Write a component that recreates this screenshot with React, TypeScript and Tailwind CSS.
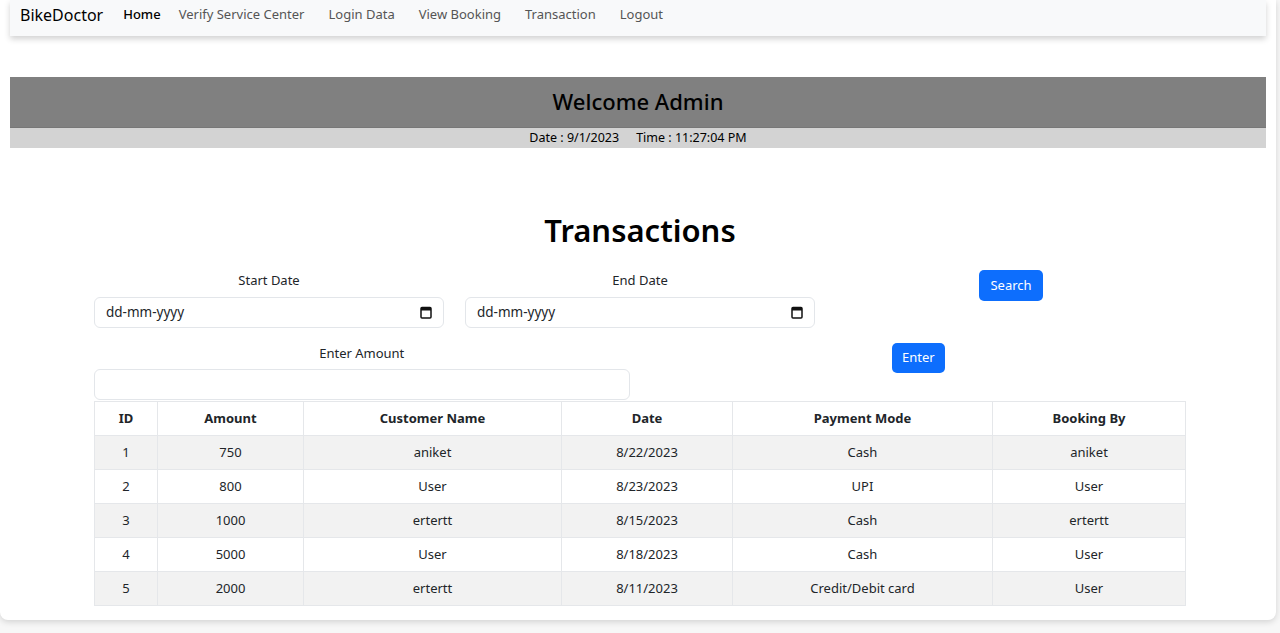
const rows = [
  { id: 1, amount: 750, name: "aniket", date: "8/22/2023", mode: "Cash", by: "aniket" },
  { id: 2, amount: 800, name: "User", date: "8/23/2023", mode: "UPI", by: "User" },
  { id: 3, amount: 1000, name: "ertertt", date: "8/15/2023", mode: "Cash", by: "ertertt" },
  { id: 4, amount: 5000, name: "User", date: "8/18/2023", mode: "Cash", by: "User" },
  { id: 5, amount: 2000, name: "ertertt", date: "8/11/2023", mode: "Credit/Debit card", by: "User" },
];

const navLinks = ["Verify Service Center", "Login Data", "View Booking", "Transaction", "Logout"];

function CalendarIcon() {
  return (
    <svg width="12" height="13" viewBox="0 0 12 13" className="shrink-0">
      <rect x="1" y="1.5" width="10" height="10.5" rx="1" fill="none" stroke="#111" strokeWidth="1.5" />
      <rect x="1" y="1.5" width="10" height="3" fill="#111" />
    </svg>
  );
}

function DateField() {
  return (
    <div className="h-[31px] w-full flex items-center justify-between px-[11px] border border-[#e3e6ea] rounded-[6px] bg-white text-[13.5px] text-[#212529]">
      <span>dd-mm-yyyy</span>
      <CalendarIcon />
    </div>
  );
}

export default function App() {
  const th = "border border-[#e5e7ea] font-bold text-[13px] text-[#212529] h-[34px] text-center";
  const td = "border border-[#e5e7ea] text-[13px] text-[#212529] h-[34px] text-center";
  return (
    <div className="min-h-screen bg-[#f7f7f7] font-['Noto_Sans',sans-serif]">
      <div className="w-[1276px] h-[620px] bg-white rounded-b-[8px] shadow-[0_2px_6px_rgba(0,0,0,0.15)] overflow-hidden">
        <nav className="mx-[10px] h-[36px] bg-[#f8f9fa] shadow-[0_3px_6px_rgba(0,0,0,0.18)] flex items-center pl-[10px] pb-[6px]">
          <span className="text-[16px] text-black mr-[20px]">BikeDoctor</span>
          <span className="text-[13px] text-black font-medium mr-[6px]">Home</span>
          {navLinks.map((l) => (
            <span key={l} className="text-[13px] text-[#555] px-[12px]">{l}</span>
          ))}
        </nav>

        <div className="mx-[10px] mt-[41px]">
          <div className="h-[51px] bg-[#808080] flex items-center justify-center border-b border-[#777] pb-[2px]">
            <span className="text-[22px] text-black font-medium">Welcome Admin</span>
          </div>
          <div className="h-[20px] bg-[#d3d3d3] flex items-center justify-center text-[12.5px] text-black">
            <span>Date : 9/1/2023</span>
            <span className="ml-[17px]">Time : 11:27:04 PM</span>
          </div>
        </div>

        <div className="w-[1092px] ml-[94px]">
          <h1 className="mt-[62px] h-[40px] flex items-center justify-center text-[31px] font-semibold text-black">Transactions</h1>

          <div className="mt-[20px] grid grid-cols-3 gap-x-[21px]">
            <div className="flex flex-col items-center">
              <label className="h-[21px] leading-[21px] text-[13px] text-[#212529]">Start Date</label>
              <div className="mt-[6px] w-full"><DateField /></div>
            </div>
            <div className="flex flex-col items-center">
              <label className="h-[21px] leading-[21px] text-[13px] text-[#212529]">End Date</label>
              <div className="mt-[6px] w-full"><DateField /></div>
            </div>
            <div className="flex justify-center items-start">
              <button className="h-[31px] px-[11px] rounded-[5px] bg-[#0d6efd] text-white text-[13px]">Search</button>
            </div>
          </div>

          <div className="mt-[15px] grid grid-cols-2 gap-x-[21px]">
            <div className="flex flex-col items-center">
              <label className="h-[21px] leading-[21px] text-[13px] text-[#212529]">Enter Amount</label>
              <div className="mt-[5px] w-full h-[31px] border border-[#e3e6ea] rounded-[6px] bg-white" />
            </div>
            <div className="flex justify-center items-start">
              <button className="h-[30px] px-[10px] rounded-[5px] bg-[#0d6efd] text-white text-[13px]">Enter</button>
            </div>
          </div>

          <table className="mt-[1px] w-full border-collapse">
            <thead>
              <tr className="bg-white">
                <th className={`${th} w-[63px]`}>ID</th>
                <th className={`${th} w-[146px]`}>Amount</th>
                <th className={`${th} w-[258px]`}>Customer Name</th>
                <th className={`${th} w-[171px]`}>Date</th>
                <th className={`${th} w-[260px]`}>Payment Mode</th>
                <th className={th}>Booking By</th>
              </tr>
            </thead>
            <tbody>
              {rows.map((r, i) => (
                <tr key={r.id} className={i % 2 === 0 ? "bg-[#f2f2f2]" : "bg-white"}>
                  <td className={td}>{r.id}</td>
                  <td className={td}>{r.amount}</td>
                  <td className={td}>{r.name}</td>
                  <td className={td}>{r.date}</td>
                  <td className={td}>{r.mode}</td>
                  <td className={td}>{r.by}</td>
                </tr>
              ))}
            </tbody>
          </table>
        </div>
      </div>
    </div>
  );
}
